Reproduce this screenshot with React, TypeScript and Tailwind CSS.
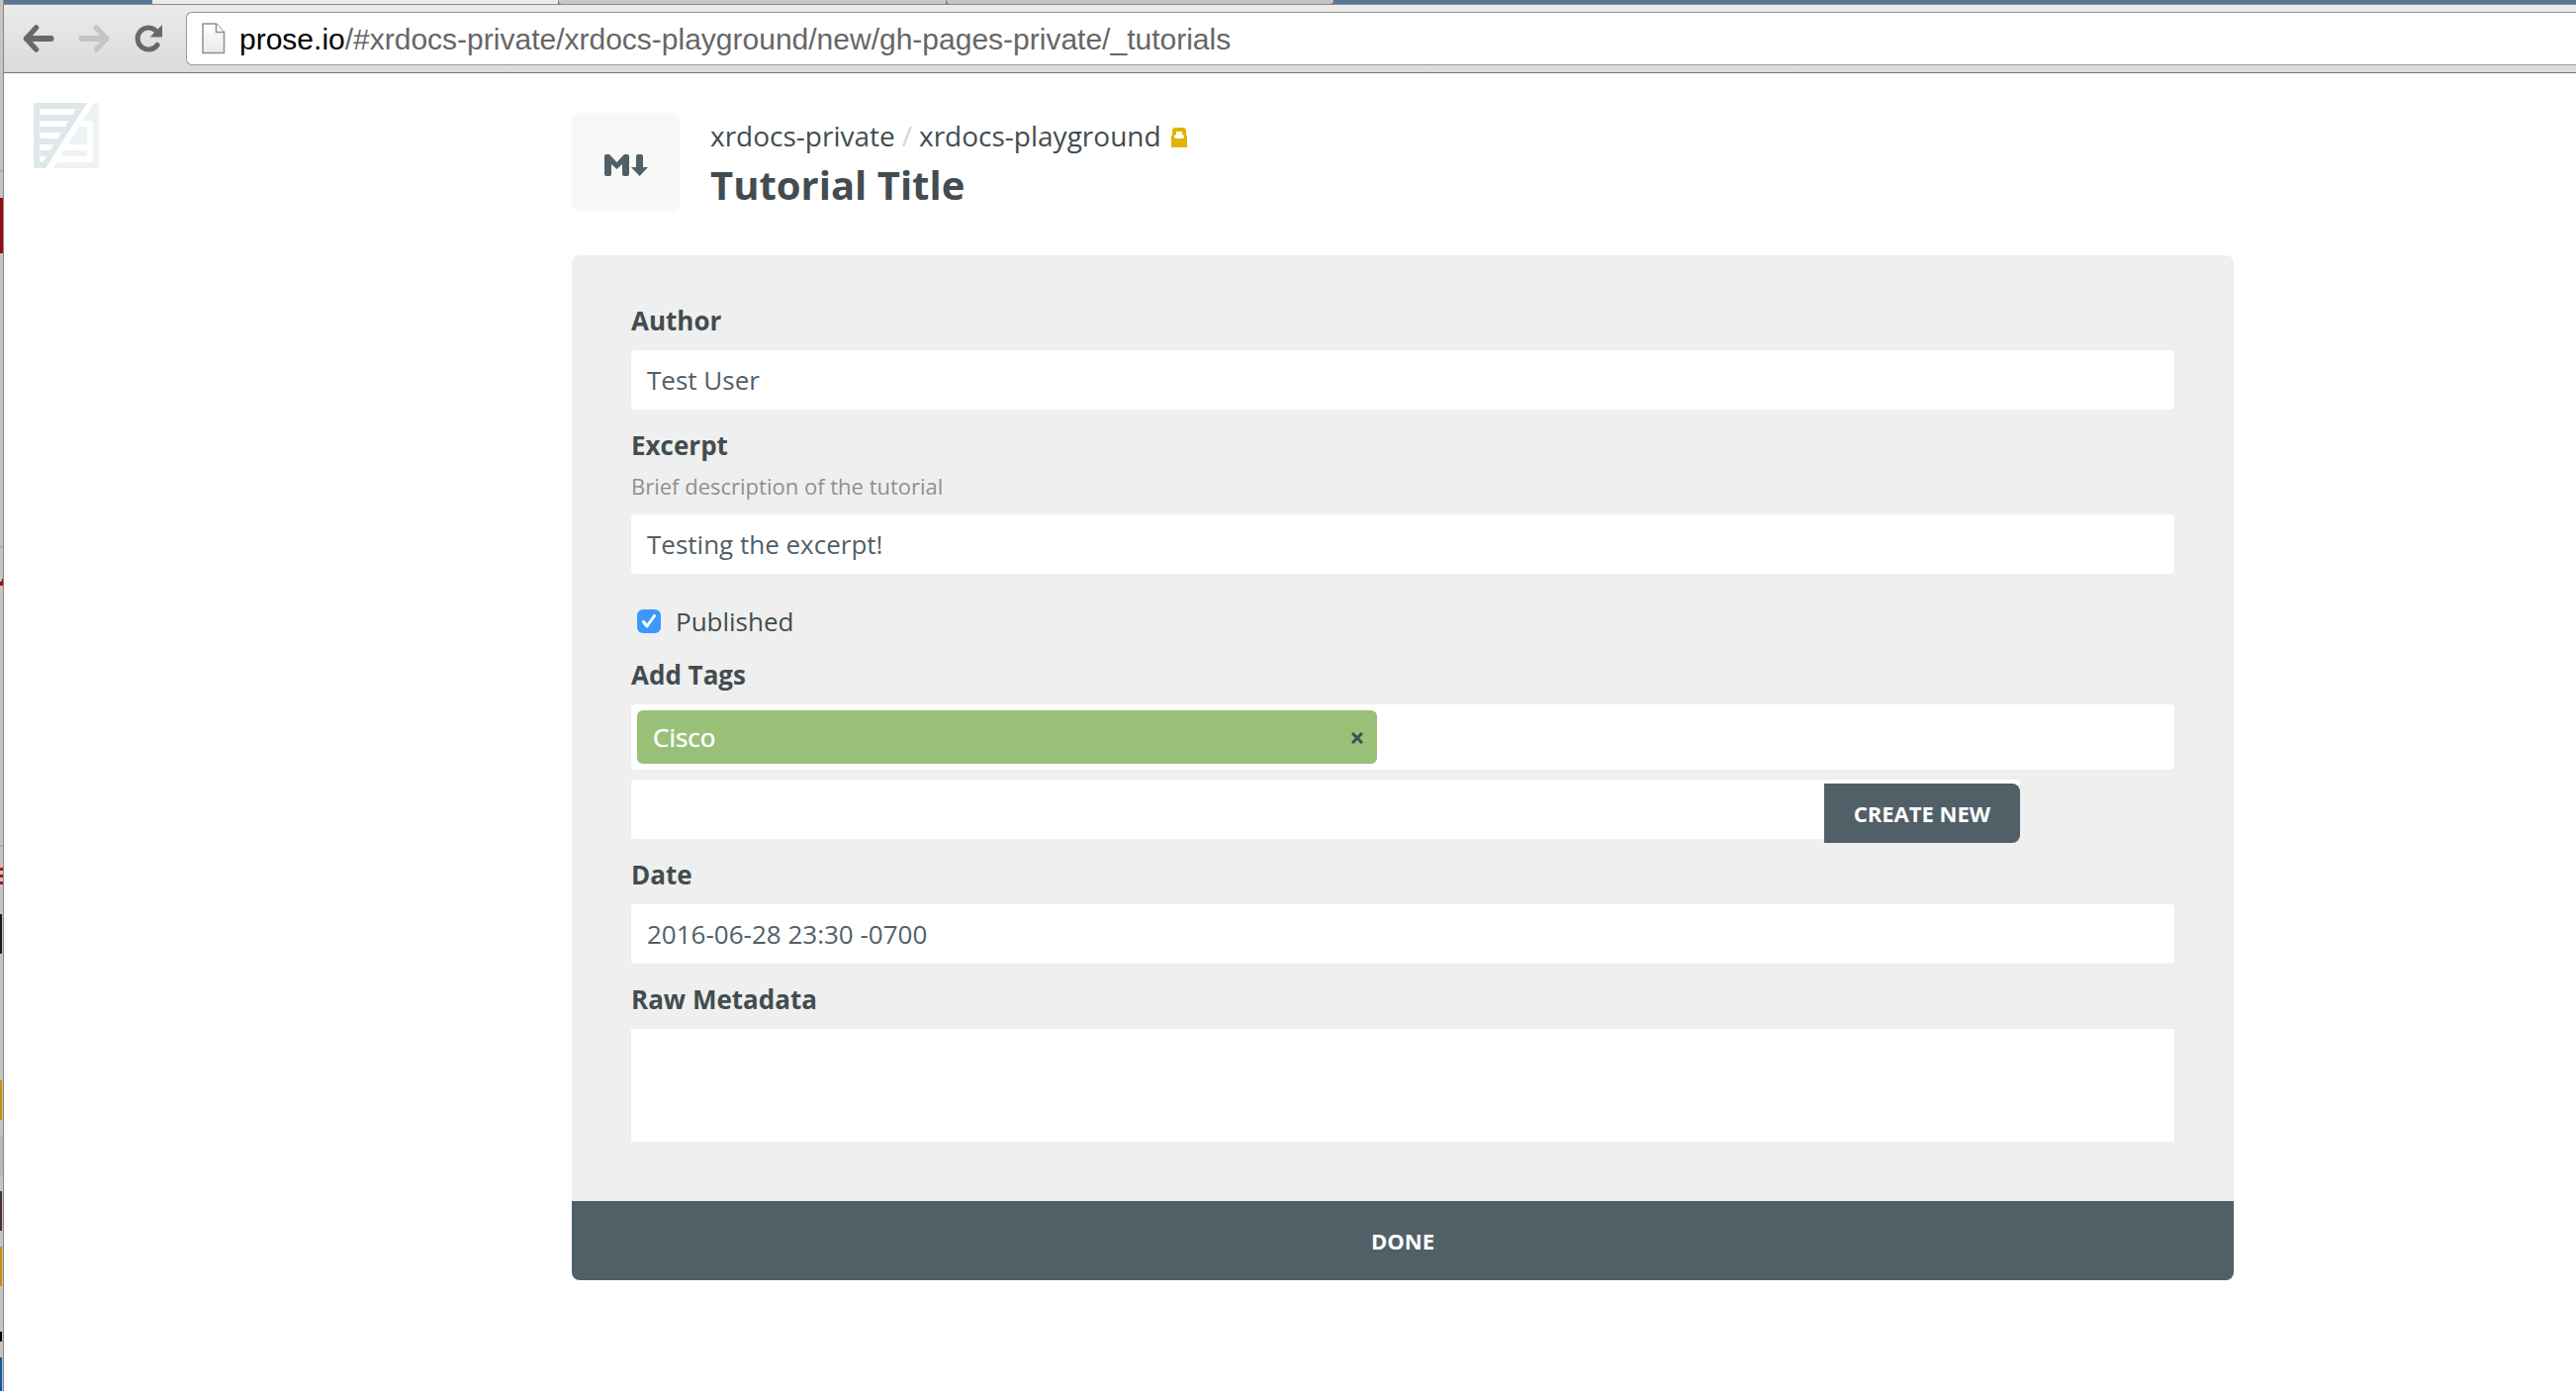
import React from "react";

const strip: [string, string][] = [
  ["h-[172px]", ""],
  ["h-0.5", "bg-[#adadac]"],
  ["h-[26px]", ""],
  ["h-14", "bg-[#990a12]"],
  ["h-[296px]", ""],
  ["h-0.5", "bg-[#adadac]"],
  ["h-[27px]", ""],
  ["h-[11px]", "bg-[linear-gradient(120deg,#c5c4c2_50%,#a01016_50%)]"],
  ["h-[262px]", ""],
  ["h-0.5", "bg-[#adadac]"],
  ["h-[21px]", ""],
  ["h-[3px]", "bg-[#b01217]"],
  ["h-1", ""],
  ["h-[3px]", "bg-[#b01217]"],
  ["h-1", ""],
  ["h-[3px]", "bg-[#b01217]"],
  ["h-[30px]", ""],
  ["h-10", "bg-[#1b191a] w-0.5"],
  ["h-32", ""],
  ["h-10", "bg-[#c1940c] w-0.5"],
  ["h-4", ""],
  ["h-10", "bg-[#b8b8b7]"],
  ["h-4", ""],
  ["h-10", "bg-[#47302a] w-0.5"],
  ["h-4", ""],
  ["h-10", "bg-[#c4920c] w-0.5"],
  ["h-[46px]", ""],
  ["h-2.5", "bg-black w-0.5"],
  ["h-4", ""],
  ["grow", "bg-[linear-gradient(#0a63a0,#1450b8)] w-0.5"],
];

function BackgroundWindow() {
  return (
    <div aria-hidden="true" className="flex w-1 shrink-0 flex-col border-r border-[#888888] bg-[#c5c4c2]">
      {strip.map(([h, c], i) => (
        <div key={i} className={`shrink-0 ${h} ${c}`} />
      ))}
    </div>
  );
}

function Arrow() {
  return (
    <svg width="32" height="30" viewBox="0 0 32 30" fill="none" stroke="currentColor" strokeLinecap="round" strokeLinejoin="round" aria-hidden="true">
      <path d="M4 15H28.500" strokeWidth="6" />
      <path d="M13.500 4L3.500 15L13.500 26" strokeWidth="5.500" />
    </svg>
  );
}

function Toolbar() {
  return (
    <header>
      <div className="flex h-1 bg-[#5a7596]" aria-hidden="true">
        <div className="w-[150px]" />
        <div className="w-[410px] bg-[#ebebeb]" />
        <div className="w-[392px] rounded-bl-sm border-l border-[#999999] bg-[#c9c9c9]" />
        <div className="w-[392px] rounded-b-sm border-l border-[#888888] bg-[#c4c4c4]" />
      </div>
      <div className="flex h-[70px] items-center border-t border-b border-t-[#8c8c8c] border-b-[#777777] bg-linear-to-b from-[#ebebeb] to-[#dadada] pl-[19px]">
        <button type="button" aria-label="Back" className="text-[#686868]">
          <Arrow />
        </button>
        <button type="button" aria-label="Forward" className="ml-6 rotate-180 text-[#c4c4c4]">
          <Arrow />
        </button>
        <button type="button" aria-label="Reload" className="ml-6 text-[#686868]">
          <svg width="32" height="30" viewBox="0 0 32 30" fill="none" aria-hidden="true">
            <path d="M24 21.500A11 11 0 1 1 22 6.500" stroke="currentColor" strokeWidth="5" strokeLinecap="round" />
            <path d="M29 1V13.500H16.500Z" fill="currentColor" />
          </svg>
        </button>
        <div className="ml-[21px] flex h-[54px] grow items-center rounded-l-md border border-r-0 border-[#999999] bg-white pl-[15px]">
          <svg width="24" height="32" viewBox="0 0 24 32" aria-hidden="true">
            <defs>
              <linearGradient id="sheet" x1="0" y1="0" x2="0" y2="1">
                <stop offset="0" stopColor="#ffffff" />
                <stop offset="1" stopColor="#e9e9e9" />
              </linearGradient>
            </defs>
            <path d="M1 1H14.500L22.500 9.500V30.500H1Z" fill="url(#sheet)" stroke="#8f8f8f" strokeWidth="1.500" />
            <path d="M14.500 1V9.500H22.500" fill="#fff" stroke="#8f8f8f" strokeWidth="1.500" />
          </svg>
          <p className="ml-3.5 pt-0.5 text-[30px] leading-9 whitespace-nowrap text-[#666666] font-['Liberation_Sans',Arial,sans-serif]">
            <span className="text-black">prose.io</span>/#xrdocs-private/xrdocs-playground/new/gh-pages-private/_tutorials
          </p>
        </div>
      </div>
    </header>
  );
}

function Logo() {
  return (
    <svg width="66" height="66" viewBox="0 0 66 66" aria-hidden="true">
      <path fill="#dfe7ea" fillRule="evenodd" d="M0 0H54L12 66H0ZM6 6V12H39.500L43 6ZM6 18V24H32L35.500 18ZM6 30V36H24.500L28 30ZM6 42V48H17L20.500 42ZM6 54V60H9L13 54Z" />
      <path fill="#edf2f5" fillRule="evenodd" d="M61 0H66V66H20L24 60H60V18H49.500Z" />
      <path fill="#edf2f5" d="M46 24H54V42H34.500ZM31 48H54V54H27Z" />
    </svg>
  );
}

function DocumentHeading() {
  return (
    <div className="flex">
      <div className="flex h-[100px] w-[110px] items-center justify-center rounded-lg bg-[#f8f8f8]">
        <svg width="44" height="22" viewBox="0 0 44 22" fill="#516067" className="mt-1.5" role="img" aria-label="Markdown">
          <path d="M0 2Q0 0 2 0H5L12.500 8L20 0H23Q25 0 25 2V20Q25 22 23 22H20Q18 22 18 20V10L12.500 15L7 10V20Q7 22 5 22H2Q0 22 0 20Z" />
          <path d="M32 2Q32 0 34 0H37Q39 0 39 2V13H44L35.500 22L27 13H32Z" />
        </svg>
      </div>
      <div className="ml-[30px]">
        <div className="flex items-center text-[28px] leading-[46px] text-[#434c50]">
          <a href="#xrdocs-private">xrdocs-private</a>
          <span className="mx-[7px] text-[#d4d7d8]">/</span>
          <a href="#xrdocs-playground">xrdocs-playground</a>
          <svg width="16" height="20" viewBox="0 0 16 20" className="mt-1 ml-2.5" role="img" aria-label="Private">
            <path fill="#e0b400" fillRule="evenodd" d="M3 0H13L15 2V8H16V20H0V8H1V2ZM5 4V7L3 8V10L5 11H11L13 10V8L11 7V4Z" />
          </svg>
        </div>
        <h1 className="text-[40px] leading-[54px] font-bold text-[#434c50]">Tutorial Title</h1>
      </div>
    </div>
  );
}

const labelCls = "block text-[26px] leading-10 font-bold text-[#434c50]";
const inputCls = "block h-[60px] w-full rounded bg-white px-4 text-[26px] text-[#516067] outline-none";

function Field({ id, label, value, hint }: { id: string; label: string; value: string; hint?: string }) {
  return (
    <div>
      <label htmlFor={id} className={labelCls}>{label}</label>
      {hint && <p className="mt-1.5 mb-3.5 text-[22px] leading-[30px] text-[#8f8f8f]">{hint}</p>}
      <input id={id} type="text" defaultValue={value} className={`mt-2.5 ${inputCls}`} />
    </div>
  );
}

function MetadataForm() {
  return (
    <form className="mt-11 overflow-hidden rounded-lg bg-[#efefef]" onSubmit={(e) => e.preventDefault()}>
      <div className="flex flex-col gap-4 px-[60px] pt-[46px] pb-[60px]">
        <Field id="author" label="Author" value="Test User" />
        <Field id="excerpt" label="Excerpt" hint="Brief description of the tutorial" value="Testing the excerpt!" />
        <div className="mt-3 -mb-0.5 flex items-center pl-1.5">
          <span className="relative flex">
            <input id="published" type="checkbox" defaultChecked className="size-6 appearance-none rounded-md bg-[#3b99fc]" />
            <svg width="24" height="24" viewBox="0 0 24 24" className="pointer-events-none absolute inset-0" fill="none" stroke="#fff" strokeWidth="3" strokeLinecap="round" strokeLinejoin="round" aria-hidden="true">
              <path d="M6.500 12.500L10 17L17.500 6.500" />
            </svg>
          </span>
          <label htmlFor="published" className="ml-[15px] text-[26px] leading-10 text-[#434c50]">Published</label>
        </div>
        <div>
          <label htmlFor="tag" className={labelCls}>Add Tags</label>
          <div className="mt-2.5 rounded bg-white p-1.5">
            <div className="flex h-[54px] w-[748px] items-center justify-between rounded-md bg-[#98c077] pr-3.5 pl-4 text-[26px] text-white">
              <span className="[text-shadow:0_0_1px_#fff]">Cisco</span>
              <button type="button" aria-label="Remove Cisco" className="mt-0.5">
                <svg width="12" height="12" viewBox="0 0 12 12" stroke="#434c50" strokeWidth="3" aria-hidden="true">
                  <path d="M1 1L11 11M11 1L1 11" />
                </svg>
              </button>
            </div>
          </div>
          <div className="mt-2.5 h-[60px] w-9/10 rounded bg-white">
            <div className="flex">
              <input id="tag" type="text" className="h-[60px] min-w-0 grow bg-transparent px-4 text-[26px] text-[#516067] outline-none" />
              <button type="button" className="mt-1 h-[60px] rounded-r-lg bg-[#516067] px-[30px] text-[22px] font-bold text-white">CREATE NEW</button>
            </div>
          </div>
        </div>
        <Field id="date" label="Date" value="2016-06-28 23:30 -0700" />
        <div>
          <label htmlFor="raw" className={labelCls}>Raw Metadata</label>
          <textarea id="raw" className="mt-2.5 block h-[114px] w-full resize-none bg-white px-4 py-3 text-[26px] text-[#516067] outline-none" />
        </div>
      </div>
      <button type="submit" className="block h-20 w-full bg-[#516067] text-[22px] font-bold text-white">DONE</button>
    </form>
  );
}

export default function App() {
  return (
    <div className="flex min-h-screen bg-white font-['Open_Sans',sans-serif]">
      <BackgroundWindow />
      <div className="min-w-0 grow">
        <Toolbar />
        <div className="grid grid-cols-[574fr_1680fr_346fr]">
          <a href="#" aria-label="Prose" className="mt-[30px] ml-[30px] block">
            <Logo />
          </a>
          <main className="pt-10">
            <DocumentHeading />
            <MetadataForm />
          </main>
        </div>
      </div>
    </div>
  );
}
